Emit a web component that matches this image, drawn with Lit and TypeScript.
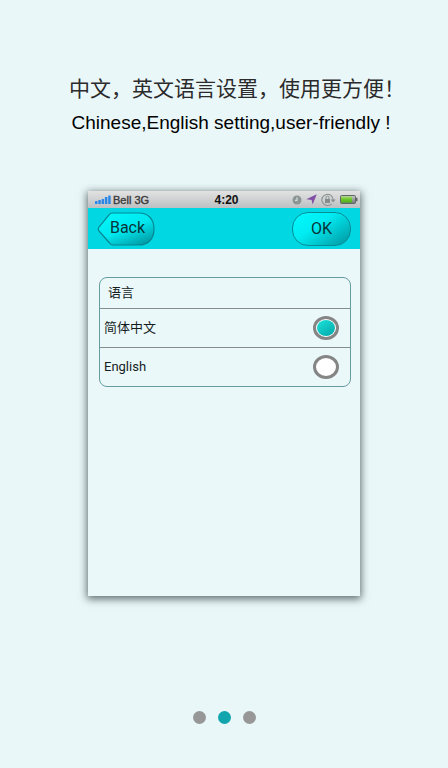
import { LitElement, html, svg, css } from "lit";
import { customElement, state } from "lit/decorators.js";

@customElement("status-bar")
class StatusBar extends LitElement {
  static styles = css`
    :host {
      display: grid;
      grid-template-columns: 1fr auto 1fr;
      align-items: center;
      height: 17px;
      padding: 0 2px 0 7px;
      background: linear-gradient(#e2e2e2, #bcc0c2);
      font: 11px/16px "Liberation Sans", Arial, sans-serif;
      color: #333;
    }
    .side {
      display: flex;
      align-items: center;
      gap: 2px;
      white-space: nowrap;
    }
    .carrier {
      -webkit-text-stroke: 0.4px #444;
    }
    .time {
      font-size: 12px;
      font-weight: bold;
      color: #111;
    }
    .end {
      justify-content: flex-end;
      gap: 4px;
    }
    svg {
      display: block;
      flex: none;
    }
  `;

  render() {
    return html`
      <div class="side">
        <svg width="16" height="9" viewBox="0 0 16 9" fill="#2b87e8" aria-hidden="true">
          ${[3, 4, 5, 7, 8.5].map(
            (h, i) => svg`<rect x=${i * 3.3} y=${9 - h} width="2.5" height=${h} rx="0.5" />`
          )}
        </svg>
        <span class="carrier">Bell 3G</span>
      </div>
      <span class="time">4:20</span>
      <div class="side end">
        <svg width="10" height="10" viewBox="0 0 10 10" aria-hidden="true">
          <circle cx="5" cy="5" r="4.5" fill="#8b9594" />
          <path d="M5 2.2V5.4H3" fill="none" stroke="#d5dada" stroke-width="1.2" />
        </svg>
        <svg width="11" height="11" viewBox="0 0 11 11" aria-hidden="true">
          <path d="M10.8 0.3L6.6 10.5L5.6 6L0.3 5.2Z" fill="#8150a6" />
        </svg>
        <svg width="15" height="13" viewBox="0 0 15 13" aria-hidden="true">
          <path d="M10.5 10.8A5.6 5.6 0 1 1 12.1 7.2" fill="none" stroke="#89908f" stroke-width="1.1" />
          <path d="M9.6 6.6H14.6L12.1 9.6Z" fill="#89908f" />
          <rect x="4" y="6" width="5" height="4" fill="#858d8c" />
          <path d="M5 6V4.6a1.5 1.5 0 0 1 3 0V6" fill="none" stroke="#858d8c" />
        </svg>
        <svg width="18" height="9" viewBox="0 0 18 9" aria-hidden="true">
          <defs>
            <linearGradient id="charge" x2="0" y2="1">
              <stop offset="0" stop-color="#a4dc6c" />
              <stop offset="0.5" stop-color="#6cc42c" />
              <stop offset="1" stop-color="#4fae12" />
            </linearGradient>
            <linearGradient id="cell" x2="0" y2="1">
              <stop offset="0" stop-color="#c4c8c8" />
              <stop offset="1" stop-color="#6f7474" />
            </linearGradient>
          </defs>
          <rect x="0.5" y="0.5" width="15" height="8" rx="1" fill="url(#cell)" stroke="#5f6765" />
          <rect x="1" y="1.500" width="11" height="6" fill="url(#charge)" />
          <path d="M15.500 2.8H17.500V6.2H15.500Z" fill="#5f6765" />
        </svg>
      </div>
    `;
  }
}

@customElement("nav-bar")
class NavBar extends LitElement {
  static styles = css`
    :host {
      display: flex;
      justify-content: space-between;
      align-items: center;
      height: 41px;
      padding: 0 9px;
      background: #00d7e3;
    }
    button {
      box-sizing: border-box;
      height: 34px;
      padding: 0;
      border: 0;
      background: none;
      color: #073539;
      font: 16px/32px Roboto, "Liberation Sans", sans-serif;
    }
    .back {
      display: grid;
      width: 58px;
    }
    .back > * {
      grid-area: 1 / 1;
    }
    .label {
      padding-left: 3px;
    }
    .ok {
      width: 59px;
      border: 1px solid #078d98;
      border-radius: 16px;
      background: linear-gradient(145deg, #00f6fa 10%, #00ecf2 40%, #009ca6 95%);
    }
  `;

  render() {
    return html`
      <button class="back" type="button">
        <svg width="58" height="34" viewBox="0 0 58 34" aria-hidden="true">
          <defs>
            <linearGradient id="gloss" x1="0.15" y1="0" x2="0.85" y2="1">
              <stop offset="0.1" stop-color="#00f4f8" />
              <stop offset="0.5" stop-color="#00e8ef" />
              <stop offset="1" stop-color="#0097a1" />
            </linearGradient>
          </defs>
          <path
            d="M15 1H42C51 1 57 7 57 17S51 33 42 33H16Q14 33 12.500 31L2 19Q0.500 17 2 15L12 3Q13.500 1 15 1Z"
            fill="url(#gloss)"
            stroke="#078792"
            stroke-width="1.2"
          />
        </svg>
        <span class="label">Back</span>
      </button>
      <button class="ok" type="button">OK</button>
    `;
  }
}

@customElement("language-list")
class LanguageList extends LitElement {
  @state() private selected = "zh";

  static styles = css`
    :host {
      display: block;
    }
    .group {
      border: 1px solid #659ca0;
      border-radius: 8px;
      font: 13px/20px Roboto, "Noto Sans CJK SC", sans-serif;
      color: #151c1d;
    }
    .title {
      margin: 0;
      padding: 5px 8px;
      font-size: 13px;
      font-weight: normal;
    }
    .row {
      box-sizing: border-box;
      display: flex;
      align-items: center;
      justify-content: space-between;
      height: 39px;
      padding: 0 11px 0 4px;
      border-top: 1px solid #858e8d;
    }
    .radio {
      appearance: none;
      box-sizing: border-box;
      width: 26px;
      height: 24px;
      margin: 0;
      border: 3px solid #858585;
      border-radius: 50%;
      background: #fff;
    }
    .radio:checked {
      padding: 1px;
    }
    .radio:checked::before {
      content: "";
      display: block;
      height: 100%;
      border-radius: 50%;
      background: linear-gradient(145deg, #1ee2da, #00a6a8);
    }
  `;

  private row(id: string, label: string) {
    return html`
      <label class="row">
        <span>${label}</span>
        <input
          class="radio"
          type="radio"
          name="language"
          .checked=${this.selected === id}
          @change=${() => (this.selected = id)}
        />
      </label>
    `;
  }

  render() {
    return html`
      <div class="group" role="radiogroup" aria-labelledby="title">
        <h2 class="title" id="title">语言</h2>
        ${this.row("zh", "简体中文")} ${this.row("en", "English")}
      </div>
    `;
  }
}

@customElement("app-root")
class AppRoot extends LitElement {
  @state() private page = 1;

  static styles = css`
    :host {
      box-sizing: border-box;
      display: flex;
      flex-direction: column;
      min-height: 100vh;
      padding: 73px 0 44px;
      background: #eaf7f9;
      font-family: "Liberation Sans", "Noto Sans CJK SC", sans-serif;
    }
    .intro {
      padding-left: 26px;
      text-align: center;
      color: #2b2b2b;
    }
    .intro > * {
      margin: 0;
      font-weight: normal;
    }
    .headline {
      font-size: 21px;
      line-height: 32px;
    }
    .tagline {
      padding-right: 12px;
      font-size: 19px;
      line-height: 36px;
      color: #000;
    }
    .phone {
      flex: 1;
      margin: 50px 88px 115px;
      background: #ebf8fa;
      box-shadow: 0 2px 8px 1px #5f6b6e;
    }
    .body {
      padding: 28px 9px 28px 11px;
    }
    .dots {
      display: flex;
      justify-content: center;
      gap: 12px;
    }
    .dot {
      width: 13px;
      height: 13px;
      padding: 0;
      border: 0;
      border-radius: 50%;
      background: #979797;
    }
    .dot[aria-current="true"] {
      background: #12a5ae;
    }
  `;

  render() {
    return html`
      <header class="intro">
        <h1 class="headline">中文，英文语言设置，使用更方便！</h1>
        <p class="tagline">Chinese,English setting,user-friendly !</p>
      </header>
      <main class="phone">
        <status-bar></status-bar>
        <nav-bar></nav-bar>
        <div class="body"><language-list></language-list></div>
      </main>
      <nav class="dots" aria-label="Pages">
        ${[0, 1, 2].map(
          (i) => html`<button
            class="dot"
            type="button"
            aria-label="Page ${i + 1}"
            aria-current=${this.page === i ? "true" : "false"}
            @click=${() => (this.page = i)}
          ></button>`
        )}
      </nav>
    `;
  }
}
